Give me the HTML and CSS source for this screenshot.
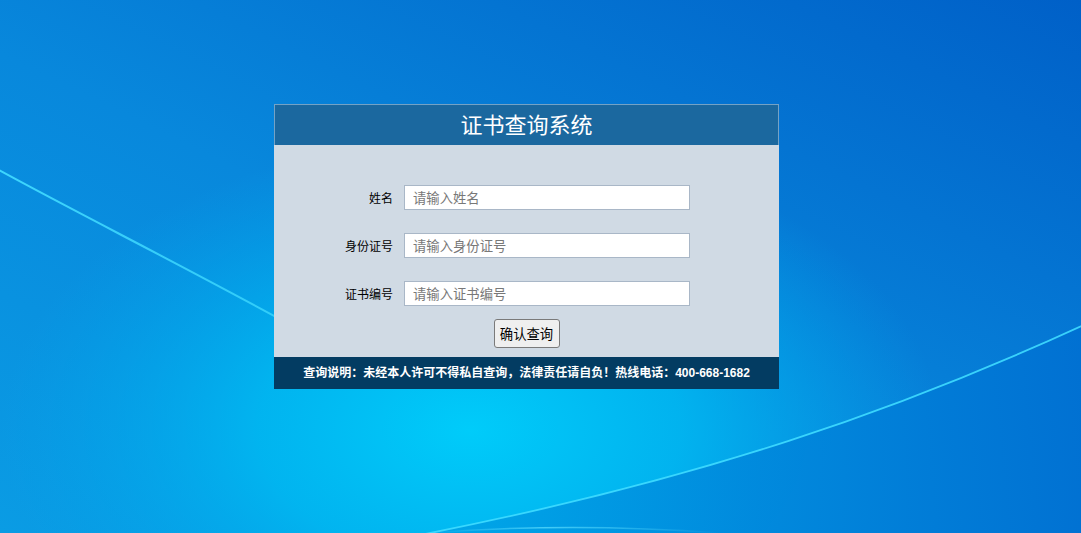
FILE: index.html
```html
<!DOCTYPE html>
<html lang="zh-CN">
<head>
<meta charset="utf-8">
<title>证书查询系统</title>
<link rel="stylesheet" href="styles.css">
</head>
<body>
<svg class="backdrop" viewBox="0 0 1081 533" preserveAspectRatio="none" aria-hidden="true">
  <defs>
    <linearGradient id="base" x1="0" y1="1" x2="1" y2="0">
      <stop offset="0" stop-color="#0a9ce4"/>
      <stop offset="0.45" stop-color="#0888dc"/>
      <stop offset="1" stop-color="#0060c8"/>
    </linearGradient>
    <radialGradient id="glow" cx="470" cy="430" r="470" gradientUnits="userSpaceOnUse" gradientTransform="translate(470 430) scale(1 0.62) translate(-470 -430)">
      <stop offset="0" stop-color="#00ccfa" stop-opacity="1"/>
      <stop offset="0.45" stop-color="#00baf2" stop-opacity="0.85"/>
      <stop offset="1" stop-color="#00a8ec" stop-opacity="0"/>
    </radialGradient>
    <linearGradient id="lower" x1="420" y1="0" x2="1081" y2="0" gradientUnits="userSpaceOnUse">
      <stop offset="0" stop-color="#00a6e8"/>
      <stop offset="0.5" stop-color="#0088dc"/>
      <stop offset="1" stop-color="#0070d2"/>
    </linearGradient>
    <linearGradient id="fade1" x1="0" y1="0" x2="340" y2="0" gradientUnits="userSpaceOnUse">
      <stop offset="0" stop-color="#40daff" stop-opacity="0.95"/>
      <stop offset="1" stop-color="#40daff" stop-opacity="0.7"/>
    </linearGradient>
    <linearGradient id="fade3" x1="430" y1="0" x2="720" y2="0" gradientUnits="userSpaceOnUse">
      <stop offset="0" stop-color="#5fe0ff" stop-opacity="0"/>
      <stop offset="0.4" stop-color="#5fe0ff" stop-opacity="0.7"/>
      <stop offset="1" stop-color="#5fe0ff" stop-opacity="0"/>
    </linearGradient>
  </defs>
  <rect width="1081" height="533" fill="url(#base)"/>
  <rect width="1081" height="533" fill="url(#glow)"/>
  <path d="M1090 322 C900 410 700 480 420 535 L1090 540 Z" fill="url(#lower)" opacity="0.9"/>
  <path d="M-5 168 C 90 220 200 274 340 352" fill="none" stroke="url(#fade1)" stroke-width="2"/>
  <path d="M1090 322 C900 410 700 480 420 535" fill="none" stroke="#3fdcff" stroke-opacity="0.9" stroke-width="1.8"/>
  <path d="M430 533 Q 570 522 720 533" fill="none" stroke="url(#fade3)" stroke-width="1.5"/>
</svg>

<main class="page">
  <section class="card">
    <header class="card-head">证书查询系统</header>
    <form class="card-body">
      <div class="fields">
        <label class="label" for="name">姓名</label>
        <input class="field" id="name" type="text" placeholder="请输入姓名">
        <label class="label" for="idno">身份证号</label>
        <input class="field" id="idno" type="text" placeholder="请输入身份证号">
        <label class="label" for="cert">证书编号</label>
        <input class="field" id="cert" type="text" placeholder="请输入证书编号">
      </div>
      <div class="actions">
        <button class="btn" type="button">确认查询</button>
      </div>
    </form>
    <footer class="card-foot">查询说明：未经本人许可不得私自查询，法律责任请自负！热线电话：400-668-1682</footer>
  </section>
</main>
</body>
</html>
```

FILE: styles.css
```css
html, body {
  margin: 0;
  padding: 0;
  height: 100%;
}

body {
  background: #0686dc;
  font-family: "Liberation Sans", "Noto Sans CJK SC", sans-serif;
  overflow: hidden;
}

.backdrop {
  position: fixed;
  left: 0;
  top: 0;
  width: 100%;
  height: 100%;
  z-index: 0;
  display: block;
}

.page {
  position: relative;
  z-index: 1;
  padding: 104px 0 0 274px;
}

.card {
  width: 505px;
}

.card-head {
  width: 503px;
  height: 36px;
  padding-bottom: 4px;
  line-height: 36px;
  background: #1b689f;
  border: 1px solid rgba(190, 210, 228, 0.55);
  border-bottom: none;
  color: #ffffff;
  font-family: "Noto Sans CJK SC", sans-serif;
  font-size: 22px;
  text-align: center;
}

.card-body {
  margin: 0;
  background: #d0dae4;
  padding: 40px 0 9px;
}

.fields {
  display: grid;
  grid-template-columns: 119px 286px;
  column-gap: 11px;
  row-gap: 23px;
  align-items: center;
}

.label {
  text-align: right;
  font-family: "Noto Sans CJK SC", sans-serif;
  font-size: 12px;
  color: #000000;
}

.field {
  box-sizing: border-box;
  width: 286px;
  height: 25px;
  margin: 0;
  padding: 0 8px;
  border: 1px solid #a9b7c7;
  background: #ffffff;
  font-family: "Noto Sans CJK SC", sans-serif;
  font-size: 13.33px;
  color: #000000;
  outline: none;
}

.field::placeholder {
  color: #787878;
}

.actions {
  display: flex;
  justify-content: center;
  margin-top: 13px;
}

.btn {
  box-sizing: border-box;
  width: 66px;
  height: 29px;
  margin: 0;
  padding: 0;
  background: #efefef;
  border: 1px solid #7a7a7a;
  border-radius: 3px;
  font-family: "Noto Sans CJK SC", sans-serif;
  font-size: 13.33px;
  color: #000000;
}

.card-foot {
  height: 32px;
  line-height: 32px;
  background: #033c62;
  color: #ffffff;
  font-size: 12px;
  font-weight: bold;
  text-align: center;
}
```
